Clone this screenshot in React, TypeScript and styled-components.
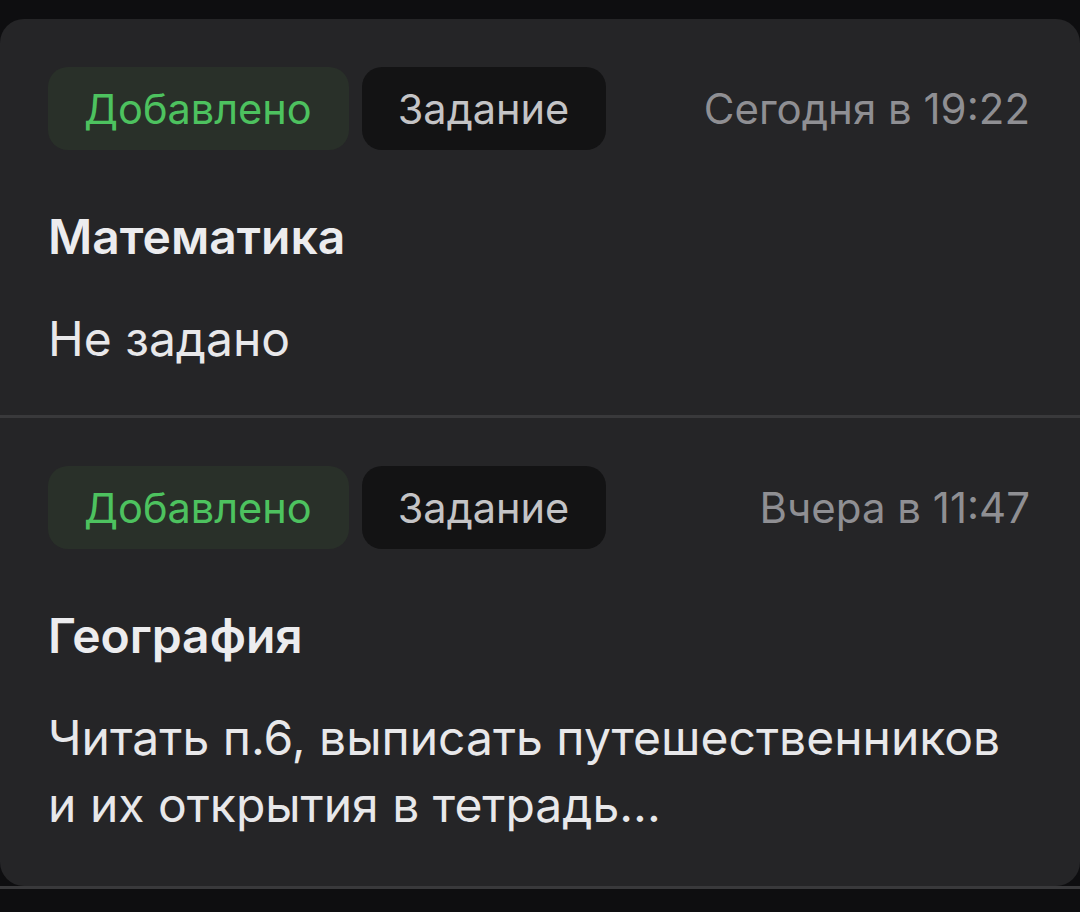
import React from "react";
import styled, { createGlobalStyle } from "styled-components";

const Global = createGlobalStyle`
  html, body { margin: 0; padding: 0; background: #0e0e10; }
  body { font-family: Inter, "Noto Sans", sans-serif; -webkit-font-smoothing: antialiased; }
`;

const Page = styled.div`
  width: 1080px;
  height: 912px;
  padding-top: 19px;
  box-sizing: border-box;
  background: #0e0e10;
  overflow: hidden;
`;

const Card = styled.div`
  background: #252527;
  border-radius: 24px;
  height: 867px;
  display: flex;
  flex-direction: column;
`;

const Item = styled.div<{ $divider?: boolean }>`
  padding: 48px 50px 0 48px;
  height: ${(p) => (p.$divider ? "348px" : "auto")};
  border-bottom: ${(p) => (p.$divider ? "3px solid #39393b" : "none")};
`;

const Header = styled.div`
  display: flex;
  align-items: center;
  gap: 13px;
`;

const Pill = styled.span<{ $tone: "green" | "dark" }>`
  display: inline-flex;
  align-items: center;
  height: 83px;
  padding: 0 37px 0 36px;
  border-radius: 20px;
  font-size: 41.5px;
  background: ${(p) => (p.$tone === "green" ? "#293029" : "#131314")};
  color: ${(p) => (p.$tone === "green" ? "#4dc25f" : "#c4c4c6")};
`;

const Time = styled.span`
  margin-left: auto;
  font-size: 42px;
  color: #8f8f93;
`;

const Title = styled.div`
  margin-top: 57px;
  font-size: 48px;
  font-weight: 600;
  color: #ececee;
  line-height: 60px;
`;

const Body = styled.div`
  margin-top: 38px;
  font-size: 48px;
  color: #e8e8ea;
  line-height: 67px;
`;

const BottomLine = styled.div`
  height: 3px;
  background: #39393b;
`;

export default function App() {
  return (
    <Page>
      <Global />
      <Card>
        <Item $divider>
          <Header>
            <Pill $tone="green">Добавлено</Pill>
            <Pill $tone="dark">Задание</Pill>
            <Time>Сегодня в 19:22</Time>
          </Header>
          <Title>Математика</Title>
          <Body>Не задано</Body>
        </Item>
        <Item>
          <Header>
            <Pill $tone="green">Добавлено</Pill>
            <Pill $tone="dark">Задание</Pill>
            <Time>Вчера в 11:47</Time>
          </Header>
          <Title>География</Title>
          <Body>
            Читать п.6, выписать путешественников
            <br />и их открытия в тетрадь...
          </Body>
        </Item>
      </Card>
      <BottomLine />
    </Page>
  );
}
